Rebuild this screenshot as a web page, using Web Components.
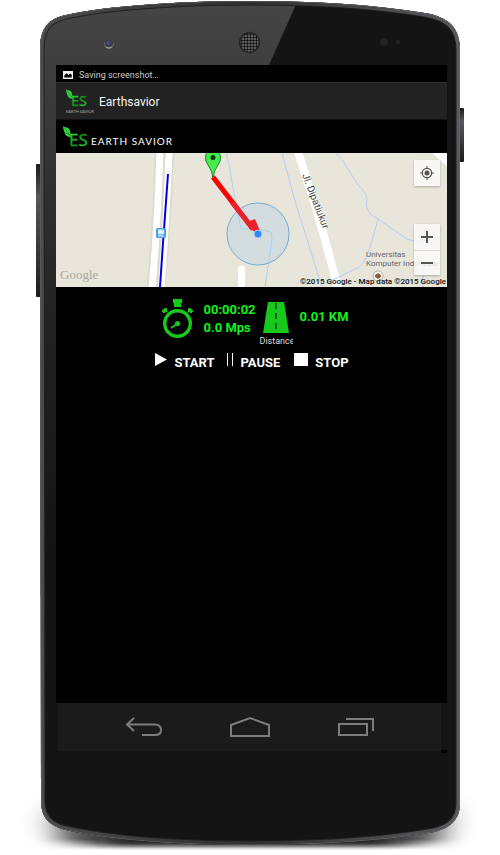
<!DOCTYPE html>
<html lang="en">
<head>
<meta charset="utf-8">
<title>Earthsavior</title>
<style>
  body { margin: 0; background: #fff; font-family: Roboto, "Liberation Sans", sans-serif; color: #fff; }
</style>
</head>
<body>
<phone-frame>
  <status-bar>Saving screenshot…</status-bar>
  <app-bar>Earthsavior</app-bar>
  <brand-banner>EARTH SAVIOR</brand-banner>
  <live-map></live-map>
  <run-stats time="00:00:02" speed="0.0 Mps" distance="0.01 KM"></run-stats>
  <run-controls></run-controls>
  <nav-bar slot="nav"></nav-bar>
</phone-frame>

<script>
const define = (name, html) => customElements.define(name, class extends HTMLElement {
  constructor() {
    super();
    this.attachShadow({ mode: 'open' }).innerHTML =
      html.replace(/\{(\w+)\}/g, (m, key) => this.getAttribute(key) ?? m);
  }
});

define('phone-frame', `
<style>
  :host { display: grid; grid-template-rows: 1fr auto; box-sizing: border-box; min-height: 100vh; padding: 65px 53px 104px 56px; position: relative; isolation: isolate; }
  .case { position: absolute; inset: 0; width: 100%; height: 100%; z-index: -1; }
  .screen { background: #000; min-width: 0; padding-bottom: 24px; }
</style>
<svg class="case" viewBox="0 0 500 855" preserveAspectRatio="none" aria-hidden="true">
  <defs>
    <linearGradient id="gloss" x1="0" y1="0" x2="0" y2="1"><stop offset="0" stop-color="#464646"/><stop offset=".15" stop-color="#3a3a3a"/><stop offset=".45" stop-color="#232323"/><stop offset=".8" stop-color="#141414"/></linearGradient>
    <linearGradient id="rim" x1="0" y1="0" x2="1" y2="0"><stop offset="0" stop-color="#4a4b4d"/><stop offset=".5" stop-color="#303030"/><stop offset="1" stop-color="#59585d"/></linearGradient>
    <linearGradient id="key" x1="0" y1="0" x2="0" y2="1"><stop offset="0" stop-color="#191919"/><stop offset=".25" stop-color="#55575a"/><stop offset="1" stop-color="#1c1c1c"/></linearGradient>
    <filter id="soft" x="-30%" y="-100%" width="160%" height="300%"><feGaussianBlur stdDeviation="15 12"/></filter>
    <filter id="thin" x="-20%" y="-200%" width="140%" height="500%"><feGaussianBlur stdDeviation="16 2"/></filter>
    <linearGradient id="fade" x1="0" y1="0" x2="0" y2="1"><stop offset="0" stop-color="#fff"/><stop offset=".9" stop-color="#fff"/><stop offset="1" stop-color="#000"/></linearGradient>
    <mask id="floor" maskUnits="userSpaceOnUse" x="0" y="740" width="500" height="110"><rect y="740" width="500" height="110" fill="url(#fade)"/></mask>
    <clipPath id="body"><path id="bp" d="M40 50C40 28 48 19 66 15C110 5 190 1 250 1C310 1 370 4 425 13C449 17 460 28 460 50V803C460 820 450 828 434 832C380 842 310 845 250 845C190 845 120 842 66 830C49 826 41 817 41 801Z"/></clipPath>
    <pattern id="mesh" width="3" height="3" patternUnits="userSpaceOnUse"><circle cx="1.500" cy="1.500" r="1.200" fill="#080808"/></pattern>
  </defs>
  <g mask="url(#floor)"><path d="M48 815H452L430 855H70Z" fill="#000" opacity=".75" filter="url(#soft)"/></g>
  <path d="M100 838H400V846H100Z" fill="#111" opacity=".8" filter="url(#thin)"/>
  <rect x="36" y="164" width="6" height="133" rx="1" fill="url(#key)"/>
  <rect x="458" y="108" width="6" height="54" rx="1" fill="url(#key)"/>
  <g clip-path="url(#body)">
    <path d="M0 0H500V855H0Z" fill="#141414"/>
    <path d="M0 0H298L269 65L0 690Z" fill="url(#gloss)"/>
    <use href="#bp" fill="none" stroke="#202020" stroke-width="9"/>
    <use href="#bp" fill="none" stroke="url(#rim)" stroke-width="7"/>
    <use href="#bp" fill="none" stroke="#88898b" stroke-width="1" opacity=".6"/>
  </g>
  <circle cx="109" cy="44" r="5" fill="#5f5f61"/><circle cx="109" cy="43" r="4" fill="#3a3a45"/><circle cx="108.500" cy="43" r="2" fill="#4b4890"/><path d="M106 47Q109 49.500 112 47" stroke="#aaa" fill="none"/>
  <circle cx="249.500" cy="42.500" r="10.500" fill="#777"/><circle cx="249.500" cy="42.500" r="10" fill="url(#mesh)"/>
  <circle cx="249.500" cy="42.500" r="10" fill="none" stroke="#242424" stroke-width="1.500"/>
  <circle cx="384" cy="42" r="4" fill="#222"/><circle cx="398" cy="42" r="2.500" fill="#212121"/>
</svg>
<div class="screen"><slot></slot></div>
<slot name="nav"></slot>`);

define('status-bar', `
<style>
  :host { display: flex; align-items: center; gap: 6px; height: 17px; padding: 0 7px; font-size: 9px; color: #c8c8c8; }
  span { padding-top: 2px; }
  svg { margin-top: 3px; }
</style>
<svg width="10" height="8" viewBox="0 0 10 8" aria-hidden="true"><path fill="#f2f2f2" fill-rule="evenodd" d="M0 0H10V8H0ZM1.300 6.500H8.700V3.500L7 2.500L5.500 4L3.500 2.300L1.300 4.500Z"/></svg>
<span><slot></slot></span>`);

define('es-logo', `
<style>:host { display: block; letter-spacing: normal; } svg { display: block; overflow: visible; }</style>
<svg width="{width}" height="{height}" viewBox="0 0 26 22" role="img" aria-label="Earth Savior logo">
  <defs>
    <linearGradient id="g" x1="0" y1="0" x2="0" y2="1"><stop offset=".2" stop-color="#2fd038"/><stop offset=".8" stop-color="#0a9010"/></linearGradient>
    <linearGradient id="h" x1="0" y1="0" x2="0" y2="1"><stop offset=".2" stop-color="#0c9012"/><stop offset=".8" stop-color="#25c22e"/></linearGradient>
  </defs>
  <path fill="#35d83c" d="M0 0C1 2 6 0 7 5Q7.500 8 8.500 10.500L6 8.500C2 8 .5 6 0 0ZM1.500 6.500C2 10 5 11 8.500 11L6 8.500Z"/>
  <path d="M1.500 2L7.500 10" stroke="#107517" stroke-width=".6"/>
  <text x="6" y="20" font-family="Noto Sans, sans-serif" font-size="17" stroke-width=".3"><tspan fill="url(#g)" stroke="url(#g)">E</tspan><tspan fill="url(#h)" stroke="url(#h)">S</tspan></text>
</svg>`);

define('app-bar', `
<style>
  :host { display: flex; align-items: center; gap: 4px; height: 37px; padding: 0 10px; background: #222; border-top: 1px solid #303030; box-sizing: border-box; color: #f3f3f3; }
  .mark { width: 29px; display: grid; gap: 2px; font: 4px/4px Lato, sans-serif; color: #aaa; white-space: nowrap; }
  h1 { font-size: 12px; font-weight: 400; margin: 0; padding-top: 1px; }
</style>
<div class="mark"><es-logo width="22" height="19"></es-logo><span>EARTH SAVIOR</span></div>
<h1><slot></slot></h1>`);

define('brand-banner', `
<style>
  :host { display: flex; align-items: center; gap: 2px; height: 34px; padding: 0 7px; font-family: Lato, sans-serif; font-size: 10px; letter-spacing: 1px; box-sizing: border-box; border-top: 1px solid #111; }
  span { padding-top: 8px; line-height: 12px; }
</style>
<es-logo width="26" height="22"></es-logo><span><slot></slot></span>`);

define('live-map', `
<style>
  :host { display: block; position: relative; height: 134px; overflow: hidden; background: #e8e5da; }
  svg.map { display: block; width: 100%; height: 100%; }
  button { display: grid; place-items: center; width: 26px; height: 26px; padding: 0; border: 0; background: #fafaf8d8; }
  .locate, .zoom { position: absolute; right: 7px; box-shadow: 0 1px 2px #0004; }
  .locate { top: 7px; }
  .zoom { top: 71px; }
  .zoom button + button { border-top: 1px solid #ddd; height: 25px; }
</style>
<svg class="map" viewBox="0 0 391 134" preserveAspectRatio="xMidYMid slice" role="img" aria-label="Route map">
  <rect width="391" height="134" fill="#e8e5da"/>
  <path d="M103 0Q101 70 95 134M114 0Q111 70 105 134" fill="none" stroke="#dedbd0" stroke-width="9"/>
  <path d="M104 -1Q102 70 96 135M113 -1Q110 70 105 135" fill="none" stroke="#fff" stroke-width="7"/>
  <path d="M108.500 -1Q106 70 101 135" fill="none" stroke="#dfdccf" stroke-width="2"/>
  <path d="M242 -2Q248 20 256 42Q267 78 282 135" fill="none" stroke="#fff" stroke-width="8"/>
  <path d="M185.500 140V116" stroke="#fff" stroke-width="7" stroke-linecap="round"/>
  <path d="M376 0H391V13Z" fill="#fff"/>
  <g fill="none" stroke="#b2cff2" stroke-width="1">
    <path d="M170 0Q174 12 176 30L185 76H202M226 0L239 48L264 128L267 134M280 0L287 8L302 32Q312 41 311 48Q309 53 314 61L322 66L345 82Q350 87 358 88H370M322 66L315 91Q310 109 303 114L285 123L270 130M202 76L215 79L216 86L209 134M367 115V134"/>
  </g>
  <path d="M112 21L107 90L104 134" fill="none" stroke="#0000e6" stroke-width="2"/>
  <g><rect x="100" y="75" width="10" height="10" rx="1.500" fill="#4e9ee3"/><rect x="102" y="76.500" width="6" height="5" rx="1" fill="#d6edff"/><path d="M102 83H108M102.500 79H107.500" stroke="#eaf6ff"/></g>
  <path d="M157 24L197 76" stroke="#f00" stroke-width="5"/>
  <circle cx="202" cy="81" r="31" fill="#a9cfe9" fill-opacity=".33" stroke="#7aa9cd"/>
  <path d="M176 49L197 76" stroke="#ea222c" stroke-width="5"/>
  <path d="M191 69L199 66L205 80L197 78Z" fill="#ea222c"/>
  <circle cx="202" cy="81" r="4" fill="#3586f5" stroke="#b4cff2"/>
  <path d="M157 25Q156 17 152 12Q149 8 149.500 4Q150 -3 157 -3Q164 -3 164.500 4Q165 8 162 12Q158 17 157 25Z" fill="#43ec4a" stroke="#228a28"/><circle cx="157" cy="4.500" r="2.500" fill="#063d0a"/>
  <g transform="translate(246 22) rotate(69)"><text font-family="Roboto, sans-serif" font-size="10" fill="#444" stroke="#fff" stroke-width="1" paint-order="stroke">Jl. Dipatiukur</text></g>
  <circle cx="322" cy="123" r="5" fill="#fff" stroke="#b7aaa0"/><path d="M319 122L322 120L325 122V124L322 126L319 124Z" fill="#8b5d43"/>
  <g font-family="Roboto, sans-serif" font-size="8" fill="#666"><text x="310" y="104">Universitas</text><text x="310" y="113">Komputer Indonesia</text></g>
  <text x="4" y="126" font-family="Liberation Serif, serif" font-size="13" fill="#aaa89f">Google</text>
  <text x="390" y="131" text-anchor="end" font-family="Roboto, sans-serif" font-size="8" font-weight="500" fill="#111">©2015 Google - Map data ©2015 Google</text>
</svg>
<button class="locate" aria-label="My location"><svg width="14" height="14" viewBox="0 0 14 14" fill="none" stroke="#555"><circle cx="7" cy="7" r="4.700" stroke-width="1.200"/><circle cx="7" cy="7" r="2.500" fill="#555" stroke="none"/><path d="M7 0V2M7 12V14M0 7H2M12 7H14"/></svg></button>
<div class="zoom">
  <button aria-label="Zoom in"><svg width="12" height="12"><path d="M6 0V12M0 6H12" stroke="#555" stroke-width="2"/></svg></button>
  <button aria-label="Zoom out"><svg width="12" height="12"><path d="M0 6H12" stroke="#555" stroke-width="2"/></svg></button>
</div>`);

define('run-stats', `
<style>
  :host { display: flex; justify-content: center; align-items: flex-start; padding: 12px 0 0 8px; height: 49px; font-size: 13px; font-weight: 700; line-height: 18px; color: #0ef21b; }
  svg { display: block; }
  .times { padding: 2px 0 0 10px; width: 51px; }
  .road { display: grid; gap: 2px; justify-items: center; width: 34px; padding: 3px 0 0 5px; }
  .road span { width: 34px; overflow: hidden; white-space: nowrap; font-size: 9px; font-weight: 400; line-height: 12px; color: #ddd; }
  .km { padding: 9px 0 0 6px; }
</style>
<svg width="31" height="40" viewBox="0 0 31 40" fill="none" stroke="#17c91d" aria-hidden="true">
  <circle cx="15.500" cy="24.500" r="12.800" stroke-width="3.400"/>
  <path d="M11 0H20V4H19V8H12V4H11Z" fill="#17c91d" stroke="none"/>
  <path d="M5 13L2 10M26 13L29 10" stroke-width="2"/><path d="M0 12L4 9L5 11L2 14ZM31 12L27 9L26 11L29 14Z" fill="#17c91d"/>
  <circle cx="15.500" cy="24.500" r="2.600" fill="#17c91d" stroke="none"/><path d="M15 25L9 29" stroke-width="2"/>
</svg>
<div class="times"><div>{time}</div><div>{speed}</div></div>
<div class="road">
  <svg width="26" height="31" viewBox="0 0 26 31" aria-hidden="true"><path d="M5 0H21L26 31H0Z" fill="#17c91d"/><path d="M13 1V31" stroke="#06400a" stroke-width="1.500" stroke-dasharray="6 4"/></svg>
  <span>Distance</span>
</div>
<div class="km">{distance}</div>`);

define('run-controls', `
<style>
  :host { display: flex; justify-content: center; gap: 11px; padding: 4px 0 0 1px; }
  button { display: flex; align-items: flex-start; gap: 7px; height: 21px; padding: 0; border: 0; background: none; color: #fff; font: 700 13px/22px Roboto, sans-serif; }
  button + button + button { margin-left: 3px; }
</style>
<button><svg width="12" height="15"><path d="M0 1L12 7.500L0 14Z" fill="#fff"/></svg>START</button>
<button><svg width="8" height="15"><path d="M1.500 1V14M6.500 1V14" stroke="#fff" stroke-width="1"/></svg>PAUSE</button>
<button><svg width="14" height="15"><path d="M0 1H14V14H0Z" fill="#fff"/></svg>STOP</button>`);

define('nav-bar', `
<style>
  :host { display: block; position: relative; }
  nav { display: flex; justify-content: center; gap: 66px; align-items: center; height: 48px; margin: 0 6px 0 2px; background: #1b1b1b; }
  :host::after { content: ""; position: absolute; right: 0; bottom: -2px; width: 6px; height: 3px; background: #000; }
  button { display: block; padding: 0; border: 0; background: none; }
  svg { display: block; }
</style>
<nav>
  <button aria-label="Back"><svg width="38" height="22" viewBox="0 0 38 22" fill="none" stroke="#7d7d7d" stroke-width="2"><path d="M9 2L2 8.500L9 15M2 8.500H30Q36 8.500 36 14Q36 19 30 19H17"/></svg></button>
  <button aria-label="Home"><svg width="42" height="22" viewBox="0 0 42 22" fill="none" stroke="#7d7d7d" stroke-width="2"><path d="M2 20V9L21 2L40 9V20Z"/></svg></button>
  <button aria-label="Recent apps"><svg width="38" height="22" viewBox="0 0 38 22" fill="none" stroke="#7d7d7d" stroke-width="2"><path d="M2 8H30V19H2ZM9 3H36V15"/></svg></button>
</nav>`);
</script>
</body>
</html>
